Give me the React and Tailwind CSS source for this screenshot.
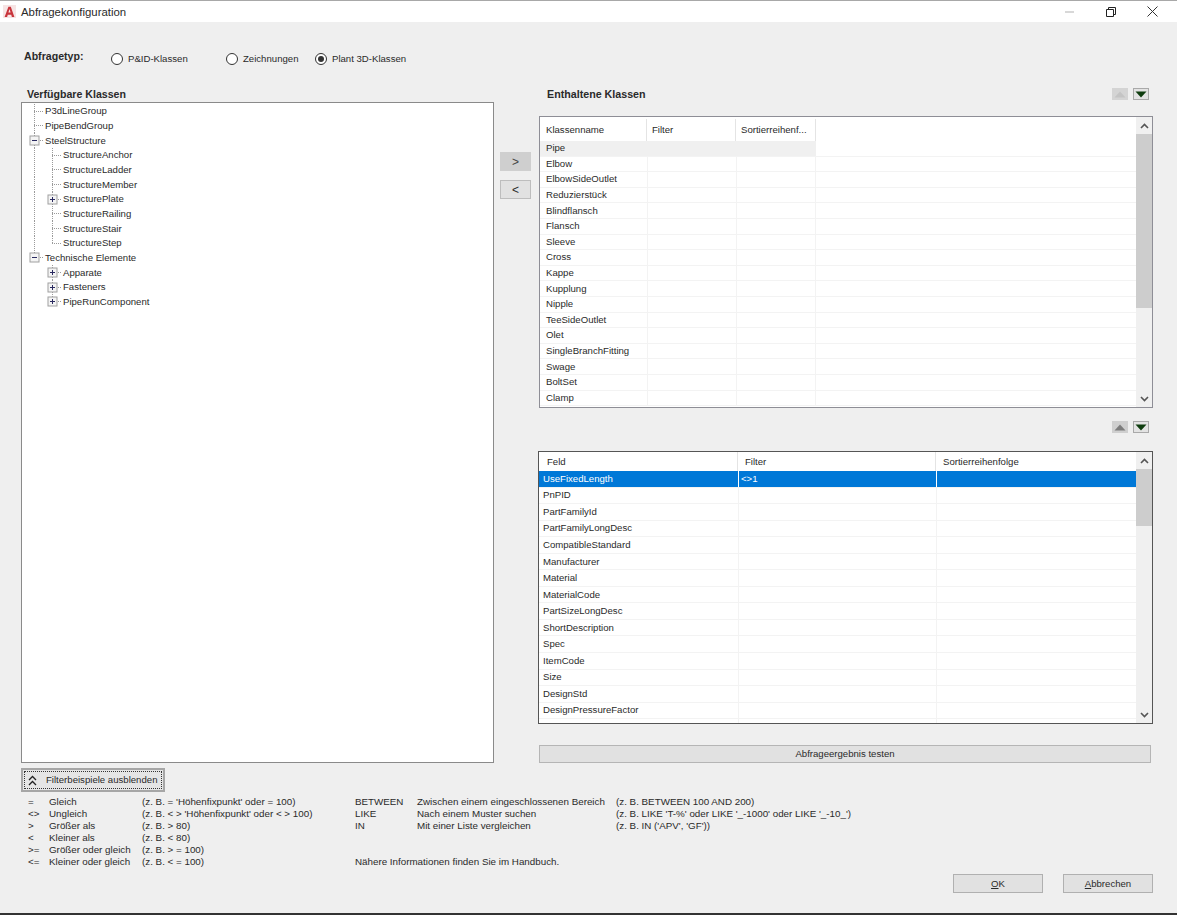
import React from "react";

const treeRows = [
  { t: "P3dLineGroup", l: 0, root: "full" },
  { t: "PipeBendGroup", l: 0, root: "full" },
  { t: "SteelStructure", l: 0, root: "full", exp: "-" },
  { t: "StructureAnchor", l: 1, root: "full", sub: "full" },
  { t: "StructureLadder", l: 1, root: "full", sub: "full" },
  { t: "StructureMember", l: 1, root: "full", sub: "full" },
  { t: "StructurePlate", l: 1, root: "full", sub: "full", exp: "+" },
  { t: "StructureRailing", l: 1, root: "full", sub: "full" },
  { t: "StructureStair", l: 1, root: "full", sub: "full" },
  { t: "StructureStep", l: 1, root: "full", sub: "half" },
  { t: "Technische Elemente", l: 0, root: "half", exp: "-" },
  { t: "Apparate", l: 1, sub: "full", exp: "+" },
  { t: "Fasteners", l: 1, sub: "full", exp: "+" },
  { t: "PipeRunComponent", l: 1, sub: "half", exp: "+" },
];

const upper = [
  "Pipe", "Elbow", "ElbowSideOutlet", "Reduzierstück", "Blindflansch", "Flansch", "Sleeve", "Cross", "Kappe",
  "Kupplung", "Nipple", "TeeSideOutlet", "Olet", "SingleBranchFitting", "Swage", "BoltSet", "Clamp",
];

const lower = [
  "UseFixedLength", "PnPID", "PartFamilyId", "PartFamilyLongDesc", "CompatibleStandard", "Manufacturer", "Material",
  "MaterialCode", "PartSizeLongDesc", "ShortDescription", "Spec", "ItemCode", "Size", "DesignStd", "DesignPressureFactor", "Weight",
];

const legend = [
  ["=", "Gleich", "(z. B. = 'Höhenfixpunkt' oder = 100)", "BETWEEN", "Zwischen einem eingeschlossenen Bereich", "(z. B. BETWEEN 100 AND 200)"],
  ["<>", "Ungleich", "(z. B. < > 'Höhenfixpunkt' oder < > 100)", "LIKE", "Nach einem Muster suchen", "(z. B. LIKE 'T-%' oder LIKE '_-1000' oder LIKE '_-10_')"],
  [">", "Größer als", "(z. B. > 80)", "IN", "Mit einer Liste vergleichen", "(z. B. IN ('APV', 'GF'))"],
  ["<", "Kleiner als", "(z. B. < 80)", "", "", ""],
  [">=", "Größer oder gleich", "(z. B. > = 100)", "", "", ""],
  ["<=", "Kleiner oder gleich", "(z. B. < = 100)", "Nähere Informationen finden Sie im Handbuch.", "", ""],
];

function ExpBox({ x, sign }) {
  return (
    <g>
      <rect x={x - 4.5} y="3" width="9" height="9" fill="#f4f4f4" stroke="#a0a0a0" />
      <path d={`M${x - 2.5} 7.5h5`} stroke="#2a2a60" strokeWidth="1" />
      {sign === "+" && <path d={`M${x} 5v5`} stroke="#2a2a60" strokeWidth="1" />}
    </g>
  );
}

function TreeRow({ row }) {
  const hx = row.l === 0 ? 12 : 30;
  const w = row.l === 0 ? 23 : 41;
  const line = { stroke: "#9a9a9a", strokeWidth: 1, strokeDasharray: "1 1" };
  return (
    <div className="flex h-[14.67px] items-center">
      <svg width={w} height="15" viewBox={`0 0 ${w} 15`} className="shrink-0">
        {row.root && <path d={row.root === "full" ? "M12.5 0v15" : "M12.5 0v7"} fill="none" {...line} />}
        {row.sub && <path d={row.sub === "full" ? "M30.5 0v15" : "M30.5 0v7"} fill="none" {...line} />}
        <path d={`M${hx} 7.5h${w - hx - 1}`} fill="none" {...line} />
        {row.exp && <ExpBox x={hx + 0.5} sign={row.exp} />}
      </svg>
      <span className="whitespace-nowrap">{row.t}</span>
    </div>
  );
}

function Triangle({ up, color }) {
  return (
    <svg width="12" height="7" viewBox="0 0 12 7">
      <path d={up ? "M0.5 6.5L6 0.5L11.5 6.5Z" : "M0.5 0.5L11.5 0.5L6 6.5Z"} fill={color} />
    </svg>
  );
}

function MoveButtons({ upColor, upBg }) {
  return (
    <div className="flex gap-[5px]">
      <div className={`flex h-[12px] w-[16px] items-center justify-center ${upBg}`}>
        <Triangle up color={upColor} />
      </div>
      <div className="flex h-[12px] w-[16px] items-center justify-center border border-[#a9a9a9] bg-[#e3e3e3]">
        <Triangle color="#0f3d0f" />
      </div>
    </div>
  );
}

function Scrollbar({ thumbTop, thumbH }) {
  return (
    <div className="flex w-[16px] shrink-0 flex-col bg-[#f0f0f0]">
      <div className="flex h-[17px] shrink-0 items-center justify-center">
        <svg width="9" height="6" viewBox="0 0 9 6"><path d="M1 5L4.5 1.5L8 5" fill="none" stroke="#555" strokeWidth="1.6" /></svg>
      </div>
      <div className="min-h-0 flex-1">
        <div style={{ marginTop: thumbTop, height: thumbH }} className="bg-[#cdcdcd]" />
      </div>
      <div className="flex h-[17px] shrink-0 items-center justify-center">
        <svg width="9" height="6" viewBox="0 0 9 6"><path d="M1 1L4.5 4.5L8 1" fill="none" stroke="#555" strokeWidth="1.6" /></svg>
      </div>
    </div>
  );
}

function Radio({ label, width, checked }) {
  return (
    <div className="flex items-center" style={width ? { width } : undefined}>
      <span className="flex h-[12px] w-[12px] items-center justify-center rounded-full border border-[#333333] bg-white">
        {checked && <span className="h-[6px] w-[6px] rounded-full bg-[#333333]" />}
      </span>
      <span className="ml-[5px] whitespace-nowrap">{label}</span>
    </div>
  );
}

export default function App() {
  return (
    <div className="flex h-[915px] w-[1177px] flex-col overflow-hidden border-t border-b-2 border-t-[#a8a8a8] border-b-[#333333] bg-[#efefef] text-[9.6px] leading-[12px] text-[#2a2a2a] [font-family:'Liberation_Sans',Arial,sans-serif]">
      <div className="flex h-[21px] shrink-0 items-center bg-white">
        <svg width="13" height="13" viewBox="0 0 12 12" className="ml-[3px]">
          <rect width="12" height="12" fill="#f6e4e4" />
          <path d="M1.5 11L5 1.5h2.2L10.5 11H8.2L7.6 9H4.4L3.8 11ZM5 7h2L6 3.8Z" fill="#c8343b" />
        </svg>
        <span className="ml-[5px] text-[11.4px]">Abfragekonfiguration</span>
        <div className="ml-auto flex items-center">
          <div className="mr-[32px] h-[2px] w-[9px] bg-[#d8d8d8]" />
          <svg width="10" height="10" viewBox="0 0 10 10" className="mr-[31px]">
            <path d="M0.5 2.5h7v7h-7zM2.5 2.5V0.5h7v7H7.5" fill="none" stroke="#222" />
          </svg>
          <svg width="11" height="11" viewBox="0 0 11 11" className="mr-[19px]">
            <path d="M0.5 0.5L10.5 10.5M10.5 0.5L0.5 10.5" fill="none" stroke="#333" />
          </svg>
        </div>
      </div>

      <div className="mt-[31px] flex h-[12px] shrink-0 items-center">
        <span className="ml-[24px] w-[87px] -translate-y-[3px] text-[10.6px] font-bold">Abfragetyp:</span>
        <Radio label="P&ID-Klassen" width="115px" />
        <Radio label="Zeichnungen" width="89px" />
        <Radio label="Plant 3D-Klassen" checked />
      </div>

      <div className="mt-[20px] flex shrink-0">
        <div className="ml-[21px] w-[473px] shrink-0">
          <div className="flex h-[17px] items-center pl-[6px] text-[10.6px] font-bold">Verfügbare Klassen</div>
          <div className="h-[661px] border border-[#8a8a8a] bg-white pt-[1px]">
            {treeRows.map((r) => <TreeRow key={r.t} row={r} />)}
          </div>
        </div>

        <div className="ml-[6px] flex w-[32px] shrink-0 flex-col pt-[67px]">
          <div className="flex h-[19px] w-[31px] items-center justify-center bg-[#cfcfcf] text-[12px] text-[#444444]">&gt;</div>
          <div className="mt-[9px] flex h-[19px] w-[31px] items-center justify-center border border-[#bdbdbd] bg-[#e1e1e1] text-[12px]">&lt;</div>
        </div>

        <div className="ml-[7px] w-[614px] shrink-0">
          <div className="flex h-[31px] items-start justify-between">
            <span className="pl-[8px] pt-[3px] text-[10.7px] font-bold">Enthaltene Klassen</span>
            <div className="mr-[4px] pt-[3px]">
              <MoveButtons upColor="#c4c4c4" upBg="bg-[#d4d4d4]" />
            </div>
          </div>

          <div className="flex h-[292px] overflow-hidden border border-[#8e8e96] bg-white">
            <div className="min-w-0 flex-1 overflow-hidden">
              <div className="flex h-[24px] w-[276px] pt-[2px]">
                <div className="flex w-[107px] items-center border-r border-[#e4e4e4] pl-[6px]">Klassenname</div>
                <div className="flex w-[89px] items-center border-r border-[#e4e4e4] pl-[5px]">Filter</div>
                <div className="flex w-[80px] items-center border-r border-[#e4e4e4] pl-[5px]">Sortierreihenf...</div>
              </div>
              {upper.map((name, i) => (
                <div key={name} className="flex h-[15.6px] border-b border-[#f3f3f3]">
                  <div className={`flex w-[107px] items-center pl-[6px] ${i === 0 ? "bg-[#f0f0f0]" : ""}`}>{name}</div>
                  <div className={`w-[89px] ${i === 0 ? "bg-[#f0f0f0]" : "border-l border-[#f3f3f3]"}`} />
                  <div className={`w-[80px] ${i === 0 ? "bg-[#f0f0f0]" : "border-x border-[#f3f3f3]"}`} />
                </div>
              ))}
            </div>
            <Scrollbar thumbTop="0px" thumbH="174px" />
          </div>

          <div className="flex h-[43px] items-start justify-end pr-[4px] pt-[13px]">
            <MoveButtons upColor="#7d7d7d" upBg="bg-[#cfcfcf]" />
          </div>

          <div className="-ml-px flex h-[273px] overflow-hidden border border-[#555555] bg-white">
            <div className="min-w-0 flex-1 overflow-hidden">
              <div className="flex h-[19px]">
                <div className="flex w-[199px] items-center border-r border-[#e4e4e4] pl-[8px]">Feld</div>
                <div className="flex w-[198px] items-center border-r border-[#e4e4e4] pl-[7px]">Filter</div>
                <div className="flex items-center pl-[7px]">Sortierreihenfolge</div>
              </div>
              {lower.map((name, i) => (
                <div key={name} className={`flex h-[16.55px] border-b border-[#f3f3f3] ${i === 0 ? "bg-[#0078d7] text-white" : ""}`}>
                  <div className="flex w-[199px] items-center pl-[4px]">{name}</div>
                  <div className={`flex w-[198px] items-center border-l pl-[2px] ${i === 0 ? "border-white" : "border-[#f3f3f3]"}`}>{i === 0 ? "<>1" : ""}</div>
                  <div className={`flex-1 border-l ${i === 0 ? "border-white" : "border-[#f3f3f3]"}`} />
                </div>
              ))}
            </div>
            <Scrollbar thumbTop="0px" thumbH="57px" />
          </div>

          <div className="mt-[21px] flex h-[18px] w-[612px] items-center justify-center border border-[#b5b5b5] bg-[#e1e1e1]">Abfrageergebnis testen</div>
        </div>
      </div>

      <div className="ml-[21px] mt-[5px] flex h-[24px] w-[144px] shrink-0 items-center border-2 border-[#a6a6a6] bg-[#e5e5e5] outline-1 -outline-offset-4 outline-dotted outline-[#333333]">
        <svg width="9" height="11" viewBox="0 0 9 11" className="ml-[5px]">
          <path d="M1 5L4.5 1.5L8 5M1 10L4.5 6.5L8 10" fill="none" stroke="#222" strokeWidth="1.3" />
        </svg>
        <span className="ml-[9px] whitespace-nowrap">Filterbeispiele ausblenden</span>
      </div>

      <div className="ml-[28px] mt-[4px] grid shrink-0 grid-cols-[21px_93px_213px_62px_199px_auto] auto-rows-[12px] whitespace-nowrap text-[9.8px]">
        {legend.map((row) =>
          row.map((c, i) => (
            <span key={row[0] + i}>{c}</span>
          ))
        )}
      </div>

      <div className="mt-[6px] flex shrink-0 justify-end gap-[20px] pr-[24px]">
        <div className="flex h-[19px] w-[90px] items-center justify-center border border-[#b0b0b0] bg-[#e1e1e1]"><span><u>O</u>K</span></div>
        <div className="flex h-[19px] w-[90px] items-center justify-center border border-[#b0b0b0] bg-[#e1e1e1]"><span><u>A</u>bbrechen</span></div>
      </div>
    </div>
  );
}
